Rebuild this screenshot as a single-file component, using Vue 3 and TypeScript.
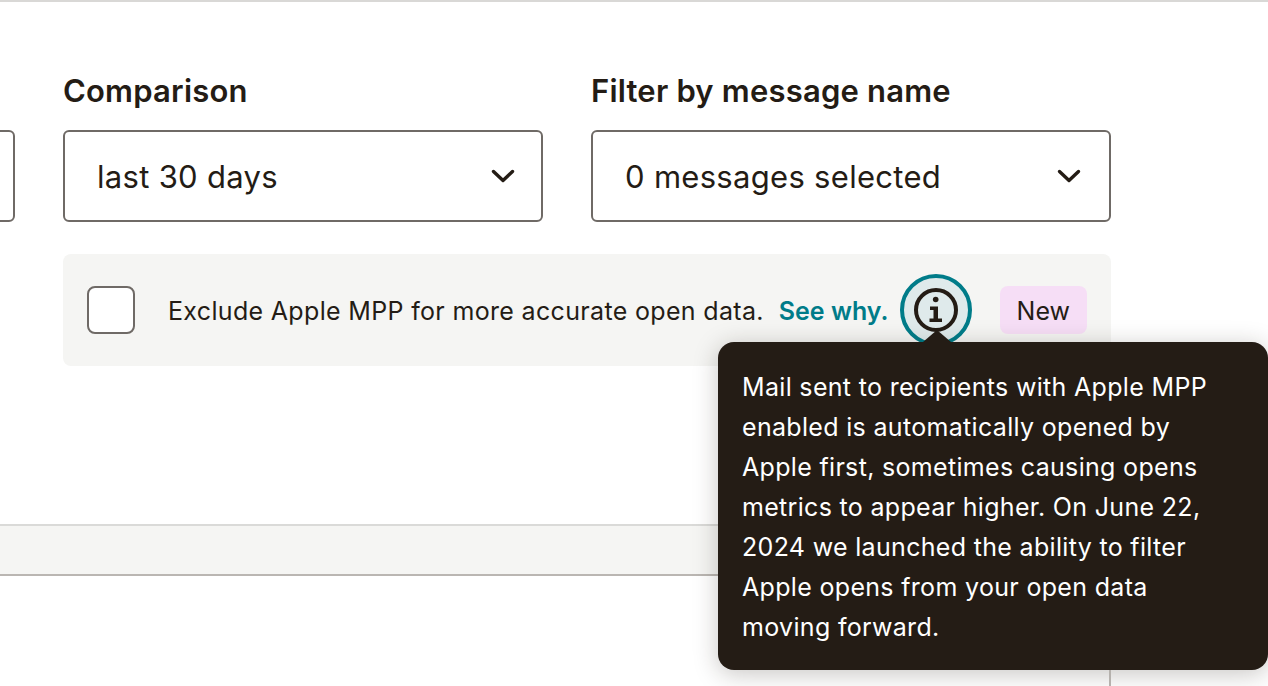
<script setup lang="ts">
const lines = [
  "Mail sent to recipients with Apple MPP",
  "enabled is automatically opened by",
  "Apple first, sometimes causing opens",
  "metrics to appear higher. On June 22,",
  "2024 we launched the ability to filter",
  "Apple opens from your open data",
  "moving forward.",
];
</script>

<template>
  <div class="page">
    <div class="filters">
      <div class="stub"></div>
      <div class="field field-a">
        <div class="label">Comparison</div>
        <div class="select">
          <span>last 30 days</span>
          <svg class="chev" width="24" height="24" viewBox="0 0 24 24"><path d="M2.500 7.500 12 16.500l9.500-9" fill="none" stroke="#241c15" stroke-width="3.400" stroke-linecap="round" stroke-linejoin="round"/></svg>
        </div>
      </div>
      <div class="field field-b">
        <div class="label">Filter by message name</div>
        <div class="select">
          <span>0 messages selected</span>
          <svg class="chev" width="24" height="24" viewBox="0 0 24 24"><path d="M2.500 7.500 12 16.500l9.500-9" fill="none" stroke="#241c15" stroke-width="3.400" stroke-linecap="round" stroke-linejoin="round"/></svg>
        </div>
      </div>
    </div>
    <div class="notice">
      <div class="check"></div>
      <span class="msg">Exclude Apple MPP for more accurate open data.</span>
      <a class="why">See why.</a>
      <div class="info">
        <svg width="48" height="48" viewBox="0 0 48 48">
          <circle cx="24" cy="24" r="20" fill="none" stroke="#241c15" stroke-width="4"/>
          <circle cx="23.700" cy="13.500" r="2.800" fill="#241c15"/>
          <path d="M18 20.500h8V32.500h4V36H17.500v-3.500h4v-8.500H18z" fill="#241c15"/>
        </svg>
      </div>
      <span class="badge">New</span>
    </div>
    <div class="band"></div>
    <div class="tooltip">
      <div class="arrow"></div>
      <div v-for="l in lines" :key="l" class="tip-line">{{ l }}</div>
    </div>
    <div class="vline"></div>
  </div>
</template>

<style>
html, body { margin: 0; padding: 0; background: #fff; }
</style>

<style scoped>
.page {
  position: relative;
  width: 1268px;
  height: 686px;
  overflow: hidden;
  background: #fff;
  border-top: 2px solid #d9d8d6;
  box-sizing: border-box;
  font-family: Inter, "Liberation Sans", sans-serif;
  color: #241c15;
}
.filters {
  display: flex;
  gap: 48px;
  padding-top: 71px;
  margin-left: -99px;
}
.stub {
  width: 114px;
  height: 92px;
  margin-top: 57px;
  box-sizing: border-box;
  border: 2px solid #6f6a66;
  border-radius: 6px;
}
.field-a { width: 480px; }
.field-b { width: 520px; }
.field-b .chev { margin-right: 2px; }
.label {
  font-size: 31px;
  line-height: 36px;
  font-weight: 600;
  margin-bottom: 21px;
  letter-spacing: 0.2px;
}
.select {
  height: 92px;
  box-sizing: border-box;
  border: 2px solid #6f6a66;
  border-radius: 6px;
  display: flex;
  align-items: center;
  justify-content: space-between;
  padding: 0 26px 0 32px;
  font-size: 31px;
  letter-spacing: 0.3px;
}
.chev { flex: none; }
.notice {
  margin: 32px 0 0 63px;
  width: 1048px;
  height: 112px;
  box-sizing: border-box;
  background: #f5f5f3;
  border-radius: 8px;
  display: flex;
  align-items: center;
  padding: 0 24px;
  font-size: 25px;
}
.check {
  width: 48px;
  height: 48px;
  box-sizing: border-box;
  border: 2px solid #6f6a66;
  border-radius: 8px;
  background: #fff;
  flex: none;
  margin-right: 33px;
}
.msg { white-space: nowrap; letter-spacing: 0.33px; padding-top: 2px; }
.why {
  color: #007c89;
  font-weight: 600;
  margin-left: 15px;
  white-space: nowrap;
  padding-top: 2px;
}
.info {
  width: 72px;
  height: 72px;
  box-sizing: border-box;
  border: 4px solid #007c89;
  border-radius: 50%;
  background: #dfeaeb;
  display: flex;
  align-items: center;
  justify-content: center;
  margin-left: 12px;
  flex: none;
}
.badge {
  margin-left: auto;
  height: 48px;
  box-sizing: border-box;
  padding: 2px 17px 0;
  display: flex;
  align-items: center;
  background: #f6def6;
  border-radius: 8px;
  font-size: 25px;
}
.band {
  margin-top: 158px;
  height: 52px;
  box-sizing: border-box;
  background: #f5f5f3;
  border-top: 2px solid #dadad8;
  border-bottom: 2px solid #bab6b2;
}
.tooltip {
  position: absolute;
  left: 718px;
  top: 340px;
  width: 550px;
  height: 328px;
  box-sizing: border-box;
  padding: 25px 24px;
  background: #241c15;
  color: #fff;
  border-radius: 16px;
  font-size: 25px;
  line-height: 40px;
  letter-spacing: 0.32px;
  box-shadow: 0 4px 24px rgba(36, 28, 21, 0.25);
}
.tip-line { white-space: nowrap; }
.arrow {
  position: absolute;
  left: 205px;
  top: -12px;
  width: 0;
  height: 0;
  border-left: 14px solid transparent;
  border-right: 14px solid transparent;
  border-bottom: 12px solid #241c15;
}
.vline {
  position: absolute;
  left: 1109px;
  top: 668px;
  width: 2px;
  height: 16px;
  background: #b5b1ad;
}
</style>
